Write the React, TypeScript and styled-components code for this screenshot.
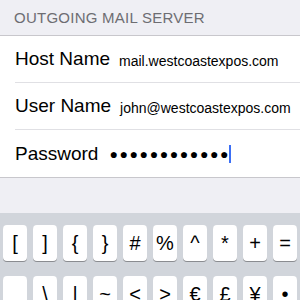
import React from "react";
import styled, { createGlobalStyle } from "styled-components";

const Global = createGlobalStyle`
  html, body { margin: 0; padding: 0; }
  body {
    width: 300px;
    height: 300px;
    overflow: hidden;
    background: #efeff4;
    font-family: "Liberation Sans", Arial, sans-serif;
  }
`;

const Screen = styled.div`
  width: 300px;
  height: 300px;
  display: flex;
  flex-direction: column;
  background: #efeff4;
`;

const SectionHeader = styled.div`
  height: 35px;
  display: flex;
  align-items: center;
  padding-left: 14px;
  font-size: 15px;
  color: #6d6d72;
  letter-spacing: 0.25px;
  border-bottom: 1px solid #c8c7cc;
  box-sizing: content-box;
`;

const Group = styled.div`
  background: #fff;
  border-bottom: 1px solid #c8c7cc;
  padding-left: 15px;
`;

const Row = styled.div<{ $last?: boolean }>`
  height: 47px;
  display: flex;
  align-items: center;
  border-bottom: ${(p) => (p.$last ? "none" : "1px solid #e0e0e4")};
  box-sizing: border-box;
`;

const Label = styled.span`
  font-size: 19px;
  color: #000;
  white-space: nowrap;
  margin-right: 9px;
`;

const Value = styled.span`
  font-size: 14px;
  color: #000;
  white-space: nowrap;
  padding-top: 3px;
`;

const Dots = styled.span`
  font-size: 14px;
  letter-spacing: 1.6px;
  color: #000;
  display: flex;
  align-items: center;
  margin-left: 2px;
`;

const Cursor = styled.span`
  display: inline-block;
  width: 2px;
  height: 18px;
  background: #3b6ff5;
  margin-left: -1px;
`;

const Spacer = styled.div`
  flex: 1;
`;

const Keyboard = styled.div`
  height: 87px;
  background: #d1d5db;
  padding: 12px 3px 0;
  box-sizing: border-box;
  display: flex;
  flex-direction: column;
  gap: 15px;
`;

const KeyRow = styled.div`
  display: grid;
  grid-template-columns: repeat(10, 1fr);
  gap: 6px;
`;

const Key = styled.div`
  height: 36px;
  background: #fff;
  border-radius: 4px;
  box-shadow: 0 1px 0 #8a8c90;
  display: flex;
  align-items: center;
  justify-content: center;
  font-family: "Liberation Sans", Arial, sans-serif;
  font-size: 20px;
  color: #000;
`;

const row1 = ["[", "]", "{", "}", "#", "%", "^", "*", "+", "="];
const row2 = ["_", "\\", "|", "~", "<", ">", "€", "£", "¥", "•"];

export default function App() {
  return (
    <>
      <Global />
      <Screen>
        <SectionHeader>OUTGOING MAIL SERVER</SectionHeader>
        <Group>
          <Row>
            <Label>Host Name</Label>
            <Value>mail.westcoastexpos.com</Value>
          </Row>
          <Row>
            <Label>User Name</Label>
            <Value>john@westcoastexpos.com</Value>
          </Row>
          <Row $last>
            <Label>Password</Label>
            <Dots>
              {"●●●●●●●●●●●●"}
              <Cursor />
            </Dots>
          </Row>
        </Group>
        <Spacer />
        <Keyboard>
          <KeyRow>
            {row1.map((k) => (
              <Key key={k}>{k}</Key>
            ))}
          </KeyRow>
          <KeyRow>
            {row2.map((k) => (
              <Key key={k}>{k}</Key>
            ))}
          </KeyRow>
        </Keyboard>
      </Screen>
    </>
  );
}
